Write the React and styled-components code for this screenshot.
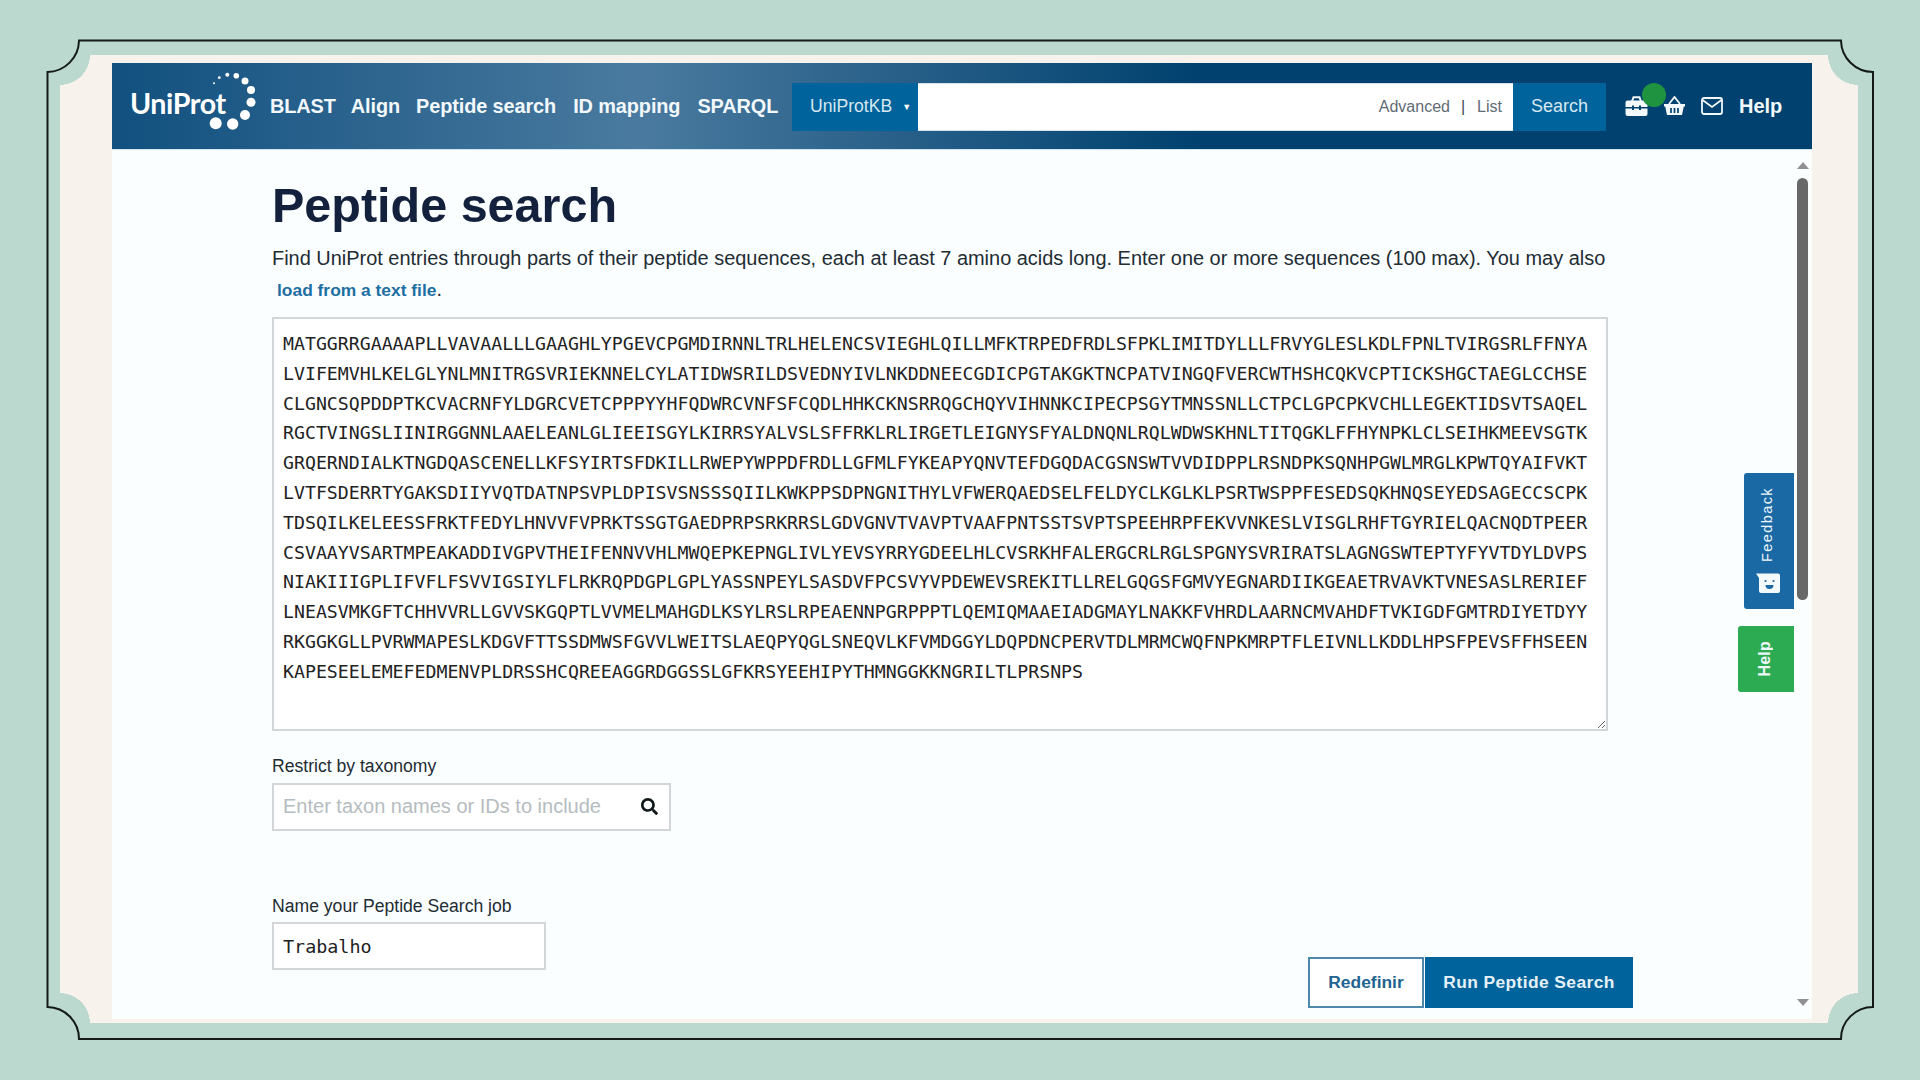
import styled, { createGlobalStyle } from "styled-components";
import { FaSearch } from "react-icons/fa";

const GlobalStyle = createGlobalStyle`
  html, body {
    margin: 0;
    padding: 0;
    background: #bcd9d0;
    overflow: hidden;
  }
  * {
    box-sizing: border-box;
  }
`;

const SEQUENCE = [
  "MATGGRRGAAAAPLLVAVAALLLGAAGHLYPGEVCPGMDIRNNLTRLHELENCSVIEGHLQILLMFKTRPEDFRDLSFPKLIMITDYLLLFRVYGLESLKDLFPNLTVIRGSRLFFNYA",
  "LVIFEMVHLKELGLYNLMNITRGSVRIEKNNELCYLATIDWSRILDSVEDNYIVLNKDDNEECGDICPGTAKGKTNCPATVINGQFVERCWTHSHCQKVCPTICKSHGCTAEGLCCHSE",
  "CLGNCSQPDDPTKCVACRNFYLDGRCVETCPPPYYHFQDWRCVNFSFCQDLHHKCKNSRRQGCHQYVIHNNKCIPECPSGYTMNSSNLLCTPCLGPCPKVCHLLEGEKTIDSVTSAQEL",
  "RGCTVINGSLIINIRGGNNLAAELEANLGLIEEISGYLKIRRSYALVSLSFFRKLRLIRGETLEIGNYSFYALDNQNLRQLWDWSKHNLTITQGKLFFHYNPKLCLSEIHKMEEVSGTK",
  "GRQERNDIALKTNGDQASCENELLKFSYIRTSFDKILLRWEPYWPPDFRDLLGFMLFYKEAPYQNVTEFDGQDACGSNSWTVVDIDPPLRSNDPKSQNHPGWLMRGLKPWTQYAIFVKT",
  "LVTFSDERRTYGAKSDIIYVQTDATNPSVPLDPISVSNSSSQIILKWKPPSDPNGNITHYLVFWERQAEDSELFELDYCLKGLKLPSRTWSPPFESEDSQKHNQSEYEDSAGECCSCPK",
  "TDSQILKELEESSFRKTFEDYLHNVVFVPRKTSSGTGAEDPRPSRKRRSLGDVGNVTVAVPTVAAFPNTSSTSVPTSPEEHRPFEKVVNKESLVISGLRHFTGYRIELQACNQDTPEER",
  "CSVAAYVSARTMPEAKADDIVGPVTHEIFENNVVHLMWQEPKEPNGLIVLYEVSYRRYGDEELHLCVSRKHFALERGCRLRGLSPGNYSVRIRATSLAGNGSWTEPTYFYVTDYLDVPS",
  "NIAKIIIGPLIFVFLFSVVIGSIYLFLRKRQPDGPLGPLYASSNPEYLSASDVFPCSVYVPDEWEVSREKITLLRELGQGSFGMVYEGNARDIIKGEAETRVAVKTVNESASLRERIEF",
  "LNEASVMKGFTCHHVVRLLGVVSKGQPTLVVMELMAHGDLKSYLRSLRPEAENNPGRPPPTLQEMIQMAAEIADGMAYLNAKKFVHRDLAARNCMVAHDFTVKIGDFGMTRDIYETDYY",
  "RKGGKGLLPVRWMAPESLKDGVFTTSSDMWSFGVVLWEITSLAEQPYQGLSNEQVLKFVMDGGYLDQPDNCPERVTDLMRMCWQFNPKMRPTFLEIVNLLKDDLHPSFPEVSFFHSEEN",
  "KAPESEELEMEFEDMENVPLDRSSHCQREEAGGRDGGSSLGFKRSYEEHIPYTHMNGGKKNGRILTLPRSNPS",
];

const NAV_LINKS = [
  { label: "BLAST", gap: 15 },
  { label: "Align", gap: 16 },
  { label: "Peptide search", gap: 17 },
  { label: "ID mapping", gap: 17 },
  { label: "SPARQL", gap: 0 },
];

const LOGO_DOTS = [
  [103.7, 60.3, 6], [120.7, 61, 5.7], [133, 52, 5], [139, 39.3, 4.5], [139, 27, 4],
  [133, 18, 3.5], [124.3, 12.7, 2.8], [115.3, 11.7, 2], [107.3, 14.7, 1.4], [102, 20.3, 1],
];

const Stage = styled.div`
  position: relative;
  width: 1920px;
  height: 1080px;
  padding: 55px 62px 57px 60px;
  background: #bcd9d0;
`;

const FrameLine = styled.svg`
  position: absolute;
  inset: 0;
  pointer-events: none;
`;

const Panel = styled.div`
  height: 100%;
  padding: 8px 46px 4px 52px;
  background:
    radial-gradient(circle 30px at 0 0, #bcd9d0 99%, transparent 100%),
    radial-gradient(circle 30px at 100% 0, #bcd9d0 99%, transparent 100%),
    radial-gradient(circle 30px at 0 100%, #bcd9d0 99%, transparent 100%),
    radial-gradient(circle 30px at 100% 100%, #bcd9d0 99%, transparent 100%),
    #f7f2ec;
`;

const Window = styled.div`
  display: flex;
  flex-direction: column;
  height: 100%;
  background: #fbfeff;
  font-family: "Liberation Sans", Arial, sans-serif;
`;

const Header = styled.header`
  display: flex;
  align-items: center;
  flex: none;
  height: 87px;
  padding: 0 0 0 18px;
  background: linear-gradient(90deg, #11507f 0%, #4a7a9f 31%, #00416f 64%);
  border-bottom: 1px solid #cfe6f2;
`;

const Logo = styled.div`
  position: relative;
  flex: none;
  width: 139px;
  height: 86px;
  color: #fff;
`;

const LogoText = styled.span`
  position: absolute;
  left: 0;
  top: 22px;
  font-family: Lato, sans-serif;
  font-size: 28.6px;
  font-weight: 700;
  letter-spacing: -0.4px;
  line-height: 36px;
`;

const LogoDots = styled.svg`
  position: absolute;
  left: -18px;
  top: 0;
`;

const NavList = styled.nav`
  display: flex;
  align-items: center;
  flex: none;
  width: 523px;
  padding-left: 1px;
`;

const NavLink = styled.a`
  margin-right: ${(props) => props.$gap}px;
  color: #f2f8fb;
  font-size: 19.9px;
  font-weight: 700;
  letter-spacing: -0.1px;
  white-space: nowrap;
`;

const SearchGroup = styled.div`
  display: flex;
  flex: none;
  width: 814px;
  height: 48px;
  margin-top: 1px;
`;

const ScopeSelect = styled.div`
  display: flex;
  align-items: center;
  flex: none;
  width: 126px;
  padding-left: 18px;
  background: #00639b;
  color: #d8e8f2;
  font-size: 17.6px;
`;

const Caret = styled.span`
  margin-left: 10px;
  font-size: 9px;
  color: #fff;
`;

const SearchField = styled.div`
  display: flex;
  align-items: center;
  justify-content: flex-end;
  flex: 1;
  padding-right: 11px;
  background: #fff;
  border-top: 1px solid #d5e2ea;
  border-bottom: 1px solid #d5e2ea;
  color: #5f6b75;
  font-size: 16px;
`;

const Divider = styled.span`
  margin: 0 12px 0 11px;
  color: #3f4a55;
`;

const SearchButton = styled.button`
  flex: none;
  width: 93px;
  border: 0;
  background: #00639b;
  color: #d8e8f2;
  font-family: inherit;
  font-size: 18px;
`;

const SecondaryNav = styled.div`
  position: relative;
  display: flex;
  align-items: center;
  gap: 15px;
  margin-left: 19px;
  color: #f2f8fb;
`;

const SecondaryHelp = styled.span`
  margin-left: 1px;
  font-size: 20px;
  font-weight: 700;
`;

const StatusDot = styled.span`
  position: absolute;
  left: 17px;
  top: -12px;
  width: 24px;
  height: 24px;
  border-radius: 50%;
  background: #1f9340;
`;

const Body = styled.main`
  position: relative;
  flex: 1;
  padding: 0 0 12px 160px;
`;

const Title = styled.h1`
  margin: 27px 0 0;
  color: #14213d;
  font-size: 48.5px;
  font-weight: 700;
  line-height: 56px;
`;

const Intro = styled.p`
  margin: 10px 0 0;
  width: 1345px;
  color: #222c33;
  font-size: 19.95px;
  line-height: 31px;
`;

const FileLink = styled.a`
  margin-left: 5px;
  color: #1d6fa3;
  font-weight: 700;
  font-size: 17.4px;
`;

const SequenceBox = styled.div`
  width: 1336px;
  height: 414px;
  margin-top: 11px;
  padding: 10px 9px;
  overflow: hidden;
  resize: both;
  background: #fff;
  border: 2px solid #d3d6d8;
  color: #222;
  font-family: "DejaVu Sans Mono", monospace;
  font-size: 18.22px;
  line-height: 29.8px;
  white-space: pre;
`;

const FieldLabel = styled.label`
  display: block;
  color: #222c33;
  font-size: 17.6px;
  line-height: 22px;
`;

const TaxonomyField = styled.div`
  margin-top: 24px;
`;

const TextBox = styled.div`
  display: flex;
  align-items: center;
  justify-content: space-between;
  width: ${(props) => props.$width}px;
  height: 48px;
  margin-top: 5.5px;
  padding: 0 11px 0 9px;
  background: #fff;
  border: 2px solid #d3d6d8;
`;

const Placeholder = styled.span`
  color: #b5bcc0;
  font-size: 20px;
`;

const MonoValue = styled.span`
  color: #222;
  font-family: "DejaVu Sans Mono", monospace;
  font-size: 18.4px;
`;

const SearchIcon = styled(FaSearch)`
  width: 17px;
  height: 17px;
  color: #10181c;
`;

const BottomRow = styled.div`
  display: flex;
  align-items: flex-end;
  justify-content: space-between;
  width: 1361px;
  margin-top: 64px;
`;

const JobField = styled.div`
  padding-bottom: 38px;
`;

const Actions = styled.div`
  display: flex;
  gap: 1px;
`;

const ResetButton = styled.button`
  width: 116px;
  height: 51px;
  background: #fff;
  border: 2px solid #4f88ad;
  color: #1f6391;
  font-family: inherit;
  font-size: 17.4px;
  font-weight: 700;
`;

const RunButton = styled.button`
  width: 208px;
  height: 51px;
  border: 0;
  background: #00639b;
  color: #e6f1f7;
  font-family: inherit;
  font-size: 17.4px;
  font-weight: 700;
  letter-spacing: 0.4px;
`;

const ScrollTrack = styled.div`
  position: absolute;
  top: 0;
  right: 1px;
  bottom: 0;
  display: flex;
  flex-direction: column;
  align-items: center;
  width: 17px;
  padding-top: 12px;
`;

const ScrollArrow = styled.span`
  width: 0;
  height: 0;
  border-left: 6px solid transparent;
  border-right: 6px solid transparent;
  ${(props) => (props.$down ? "border-top: 7px solid #909090; margin-top: 399px;" : "border-bottom: 7px solid #909090;")}
`;

const ScrollThumb = styled.div`
  width: 11px;
  height: 422px;
  margin-top: 9px;
  border-radius: 6px;
  background: #686868;
`;

const SideTab = styled.div`
  position: absolute;
  right: 18px;
  display: flex;
  flex-direction: column;
  align-items: center;
  border-radius: 3px 0 0 3px;
  color: #eef7fb;
`;

const FeedbackTab = styled(SideTab)`
  top: 323px;
  width: 50px;
  height: 136px;
  padding: 14px 3px 0 0;
  background: #1a69a5;
  font-family: "Liberation Sans", sans-serif;
`;

const HelpTab = styled(SideTab)`
  top: 476px;
  width: 56px;
  height: 66px;
  justify-content: center;
  padding-right: 3px;
  background: #2cab52;
  font-family: "Liberation Sans", sans-serif;
  font-weight: 700;
`;

const VerticalText = styled.span`
  writing-mode: vertical-rl;
  transform: rotate(180deg);
  font-size: ${(props) => props.$size}px;
  letter-spacing: ${(props) => props.$spacing}px;
  line-height: 1;
`;

const FeedbackFace = styled.svg`
  margin-top: 11px;
`;

export default function App() {
  return (
    <>
      <GlobalStyle />
      <Stage>
        <Panel>
          <Window>
            <Header>
              <Logo>
                <LogoText>UniProt</LogoText>
                <LogoDots width="170" height="87" viewBox="0 0 170 87">
                  {LOGO_DOTS.map(([cx, cy, r]) => (
                    <circle key={cx + "-" + cy} cx={cx} cy={cy} r={r} fill="#fff" />
                  ))}
                </LogoDots>
              </Logo>
              <NavList>
                {NAV_LINKS.map((link) => (
                  <NavLink key={link.label} $gap={link.gap}>{link.label}</NavLink>
                ))}
              </NavList>
              <SearchGroup>
                <ScopeSelect>UniProtKB<Caret>▼</Caret></ScopeSelect>
                <SearchField>Advanced<Divider>|</Divider>List</SearchField>
                <SearchButton>Search</SearchButton>
              </SearchGroup>
              <SecondaryNav>
                <svg width="23" height="20" viewBox="0 0 23 20" fill="none">
                  <path d="M7 5.5L8.5 1.2H14.5L16 5.5" stroke="currentColor" strokeWidth="2" />
                  <path d="M2.5 4.5H20.5a2 2 0 0 1 2 2V11H16v-1.4h-2V11H9v-1.4H7V11H.5V6.5a2 2 0 0 1 2-2z" fill="currentColor" />
                  <path d="M.5 12.6H7V14h2v-1.4h5V14h2v-1.4h6.5V18a2 2 0 0 1-2 2H2.5a2 2 0 0 1-2-2z" fill="currentColor" />
                </svg>
                <svg width="23" height="20" viewBox="0 0 23 20" fill="none">
                  <path d="M1 8h21v2.5h-1.2L19 19H4L2.2 10.5H1z" fill="currentColor" />
                  <path d="M6 8l5.5-7L17 8" stroke="currentColor" strokeWidth="1.8" />
                  <path d="M8 12v5M11.5 12v5M15 12v5" stroke="#00416f" strokeWidth="1.7" />
                </svg>
                <svg width="22" height="18" viewBox="0 0 22 18" fill="none">
                  <rect x="1" y="1" width="20" height="16" rx="2" stroke="currentColor" strokeWidth="1.8" />
                  <path d="M1.5 3l9.5 7 9.5-7" stroke="currentColor" strokeWidth="1.8" />
                </svg>
                <SecondaryHelp>Help</SecondaryHelp>
                <StatusDot />
              </SecondaryNav>
            </Header>
            <Body>
              <Title>Peptide search</Title>
              <Intro>
                Find UniProt entries through parts of their peptide sequences, each at least 7 amino acids long. Enter one or more sequences (100 max). You may also
                <br />
                <FileLink>load from a text file</FileLink>.
              </Intro>
              <SequenceBox>
                {SEQUENCE.map((line) => (
                  <div key={line}>{line}</div>
                ))}
              </SequenceBox>
              <TaxonomyField>
                <FieldLabel>Restrict by taxonomy</FieldLabel>
                <TextBox $width={399}>
                  <Placeholder>Enter taxon names or IDs to include</Placeholder>
                  <SearchIcon />
                </TextBox>
              </TaxonomyField>
              <BottomRow>
                <JobField>
                  <FieldLabel>Name your Peptide Search job</FieldLabel>
                  <TextBox $width={274}>
                    <MonoValue>Trabalho</MonoValue>
                  </TextBox>
                </JobField>
                <Actions>
                  <ResetButton>Redefinir</ResetButton>
                  <RunButton>Run Peptide Search</RunButton>
                </Actions>
              </BottomRow>
              <ScrollTrack>
                <ScrollArrow />
                <ScrollThumb />
                <ScrollArrow $down />
              </ScrollTrack>
              <FeedbackTab>
                <VerticalText $size={14.5} $spacing={1.4}>Feedback</VerticalText>
                <FeedbackFace width="24" height="20" viewBox="0 0 24 20">
                  <path d="M0 0.5H22a2 2 0 0 1 2 2V18a2 2 0 0 1-2 2H5a2 2 0 0 1-2-2V5z" fill="#f4f9fc" />
                  <circle cx="9.5" cy="8" r="1.1" fill="#1a69a5" />
                  <circle cx="17.5" cy="8" r="1.1" fill="#1a69a5" />
                  <path d="M9.5 12h8a4 4 0 0 1-8 0z" fill="#1a69a5" />
                </FeedbackFace>
              </FeedbackTab>
              <HelpTab>
                <VerticalText $size={16} $spacing={0.2}>Help</VerticalText>
              </HelpTab>
            </Body>
          </Window>
        </Panel>
        <FrameLine width="1920" height="1080" viewBox="0 0 1920 1080" fill="none">
          <path
            d="M79 40.5H1841A32 32 0 0 0 1873 72V1007A32 32 0 0 0 1841 1039H79A32 32 0 0 0 47.5 1007V72A32 32 0 0 0 79 40.5Z"
            stroke="#141a18"
            strokeWidth="2"
          />
        </FrameLine>
      </Stage>
    </>
  );
}
